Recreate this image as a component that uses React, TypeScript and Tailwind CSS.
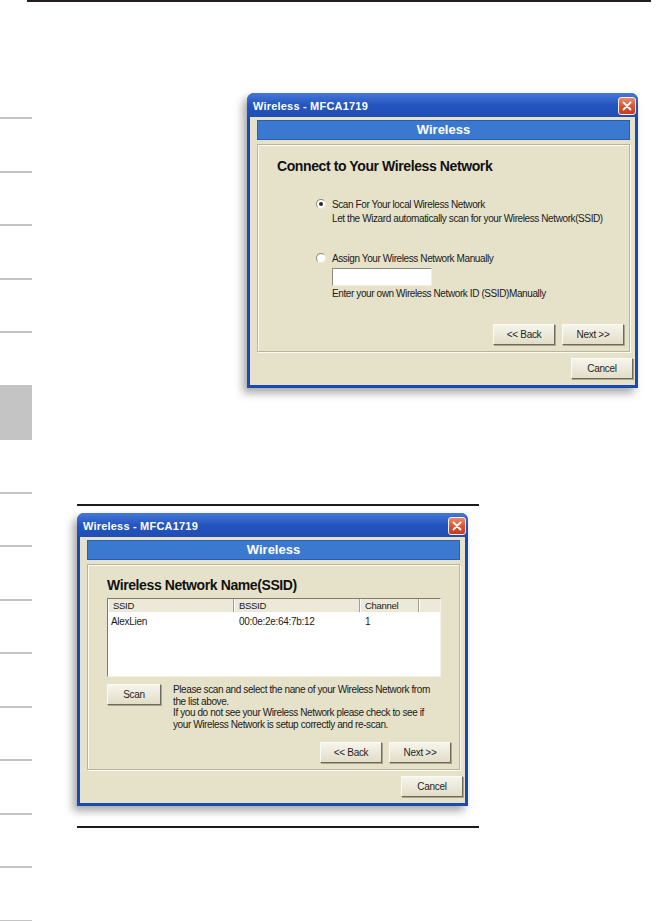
import type { ReactNode } from "react";

function Close() {
  return (
    <div className="flex h-[18px] w-[18px] items-center justify-center rounded-[3px] border border-[#f3f1ea] bg-gradient-to-b from-[#ec8a68] via-[#dc5535] to-[#c53b1d]">
      <svg width="10" height="10" viewBox="0 0 10 10">
        <path d="M1.5 1.5 L8.5 8.5 M8.5 1.5 L1.5 8.5" stroke="#fff" strokeWidth="1.8" strokeLinecap="round" />
      </svg>
    </div>
  );
}

function Btn({ children, className = "" }: { children: ReactNode; className?: string }) {
  return (
    <div
      className={`flex h-[21px] items-center justify-center border border-t-[#fbfaf4] border-l-[#fbfaf4] border-r-[#6e6b5c] border-b-[#6e6b5c] bg-gradient-to-b from-[#f6f5ec] to-[#e1ddc7] text-[10px] tracking-[-0.3px] text-[#1e1e1e] shadow-[1px_1px_0_#a9a690] ${className}`}
    >
      {children}
    </div>
  );
}

function Radio({ checked = false }: { checked?: boolean }) {
  return (
    <span className="flex h-[10px] w-[10px] shrink-0 items-center justify-center rounded-full border border-t-[#8d8b7e] border-l-[#8d8b7e] border-r-[#eeebdc] border-b-[#eeebdc] bg-white">
      {checked && <span className="h-[4px] w-[4px] rounded-full bg-[#2a2a2a]" />}
    </span>
  );
}

function Win({ groupH, children }: { groupH: string; children: ReactNode }) {
  return (
    <div className="flex w-[391px] flex-col rounded-t-[7px] bg-[#1a49b0] shadow-[-4px_5px_8px_rgba(0,0,0,0.35)]">
      <div className="flex h-[24px] items-center justify-between rounded-t-[7px] bg-gradient-to-b from-[#4678d6] via-[#2455bf] to-[#1f4db3] pl-[6px] pr-[2px] pt-[2px]">
        <span className="text-[11px] font-bold leading-none tracking-[0.2px] text-white">Wireless - MFCA1719</span>
        <Close />
      </div>
      <div className="mx-[3px] mb-[3px] flex flex-col bg-[#e6e2c9] pb-[6px] pl-[7px] pr-[5px] pt-[3px]">
        <div className="flex h-[20px] items-center justify-center border border-[#2b5cb0] bg-[#3b79d1] text-[13px] font-bold text-white">
          Wireless
        </div>
        <div
          className={`mt-[4px] flex flex-col border border-[#b9b59d] shadow-[inset_1px_1px_0_#fbfaf2,1px_1px_0_#fbfaf2] ${groupH}`}
        >
          {children}
        </div>
        <div className="mr-[-3px] mt-[6px] flex justify-end">
          <Btn className="w-[62px]">Cancel</Btn>
        </div>
      </div>
    </div>
  );
}

function Tabs() {
  const cells = Array.from({ length: 16 }, (_, i) => i);
  return (
    <div className="flex h-[919px] w-[32px] shrink-0 flex-col overflow-hidden pt-[115px]">
      {cells.map((i) => (
        <div
          key={i}
          className={
            i === 5
              ? "h-[53.5px] shrink-0 border-t-2 border-[#c4c4c4] bg-[#c4c4c4]"
              : "h-[53.5px] shrink-0 border-t-2 border-[#c4c4c4]"
          }
        />
      ))}
    </div>
  );
}

function ConnectWindow() {
  return (
    <Win groupH="h-[208px]">
      <div className="pl-[19px] pt-[13px] text-[14px] font-bold leading-[16px] tracking-[-0.4px] text-[#111]">
        Connect to Your Wireless Network
      </div>
      <div className="flex flex-col pl-[58px] text-[10px] tracking-[-0.4px] text-[#1a1a1a]">
        <div className="mt-[24px] flex h-[12px] items-center gap-[6px]">
          <Radio checked />
          <span>Scan For Your local Wireless Network</span>
        </div>
        <div className="ml-[16px] mt-[3px] leading-[12px]">
          Let the Wizard automatically scan for your Wireless Network(SSID)
        </div>
        <div className="mt-[27px] flex h-[12px] items-center gap-[6px]">
          <Radio />
          <span>Assign Your Wireless Network Manually</span>
        </div>
        <div className="ml-[16px] mt-[4px] h-[18px] w-[100px] border border-t-[#8d8b7e] border-l-[#8d8b7e] border-r-[#f1efe3] border-b-[#f1efe3] bg-white" />
        <div className="ml-[16px] mt-[2px] leading-[12px]">
          Enter your own Wireless Network ID (SSID)Manually
        </div>
      </div>
      <div className="mt-[24px] flex justify-end gap-[7px] pr-[5px]">
        <Btn className="w-[62px]">&lt;&lt; Back</Btn>
        <Btn className="w-[62px]">Next &gt;&gt;</Btn>
      </div>
    </Win>
  );
}

function ScanWindow() {
  return (
    <Win groupH="h-[206px]">
      <div className="pl-[19px] pt-[12px] text-[14px] font-bold leading-[16px] tracking-[-0.4px] text-[#111]">
        Wireless Network Name(SSID)
      </div>
      <div className="ml-[19px] mt-[5px] h-[79px] w-[334px] border border-t-[#7d7b6e] border-l-[#7d7b6e] border-r-[#f4f2e8] border-b-[#f4f2e8] bg-white text-[#1a1a1a]">
        <div className="flex h-[13px] bg-[#ece9d8] text-[9.5px] leading-[13px] tracking-[-0.3px]">
          <div className="w-[126px] border-r border-[#a19e8c] pl-[5px] shadow-[inset_1px_0_0_#fff]">SSID</div>
          <div className="w-[126px] border-r border-[#a19e8c] pl-[5px] shadow-[inset_1px_0_0_#fff]">BSSID</div>
          <div className="w-[59px] border-r border-[#a19e8c] pl-[5px] shadow-[inset_1px_0_0_#fff]">Channel</div>
          <div className="flex-1 shadow-[inset_1px_0_0_#fff]" />
        </div>
        <div className="mt-[3px] flex text-[10px] leading-[14px] tracking-[-0.3px]">
          <div className="w-[126px] pl-[3px]">AlexLien</div>
          <div className="w-[126px] pl-[5px]">00:0e:2e:64:7b:12</div>
          <div className="w-[59px] pl-[5px]">1</div>
        </div>
      </div>
      <div className="ml-[19px] mt-[7px] flex items-start gap-[12px]">
        <Btn className="w-[54px]">Scan</Btn>
        <p className="whitespace-nowrap text-[10px] leading-[11.7px] tracking-[-0.4px] text-[#1a1a1a]">
          Please scan and select the nane of your Wireless Network from
          <br />
          the list above.
          <br />
          If you do not see your Wireless Network please check to see if
          <br />
          your Wireless Network is setup correctly and re-scan.
        </p>
      </div>
      <div className="mt-[11px] flex justify-end gap-[7px] pr-[8px]">
        <Btn className="w-[62px]">&lt;&lt; Back</Btn>
        <Btn className="w-[62px]">Next &gt;&gt;</Btn>
      </div>
    </Win>
  );
}

export default function App() {
  return (
    <div className="h-[921px] w-[665px] overflow-hidden bg-white font-['Liberation_Sans',Arial,sans-serif]">
      <div className="ml-[27px] h-[2px] w-[624px] bg-[#231f20]" />
      <div className="flex">
        <Tabs />
        <div className="flex flex-col">
          <div className="ml-[215px] mt-[91px]">
            <ConnectWindow />
          </div>
          <div className="ml-[45px] mt-[116px] h-[2px] w-[402px] bg-[#1c1a1b]" />
          <div className="ml-[45px] mt-[7px]">
            <ScanWindow />
          </div>
          <div className="ml-[45px] mt-[20px] h-[2px] w-[402px] bg-[#1c1a1b]" />
        </div>
      </div>
    </div>
  );
}
